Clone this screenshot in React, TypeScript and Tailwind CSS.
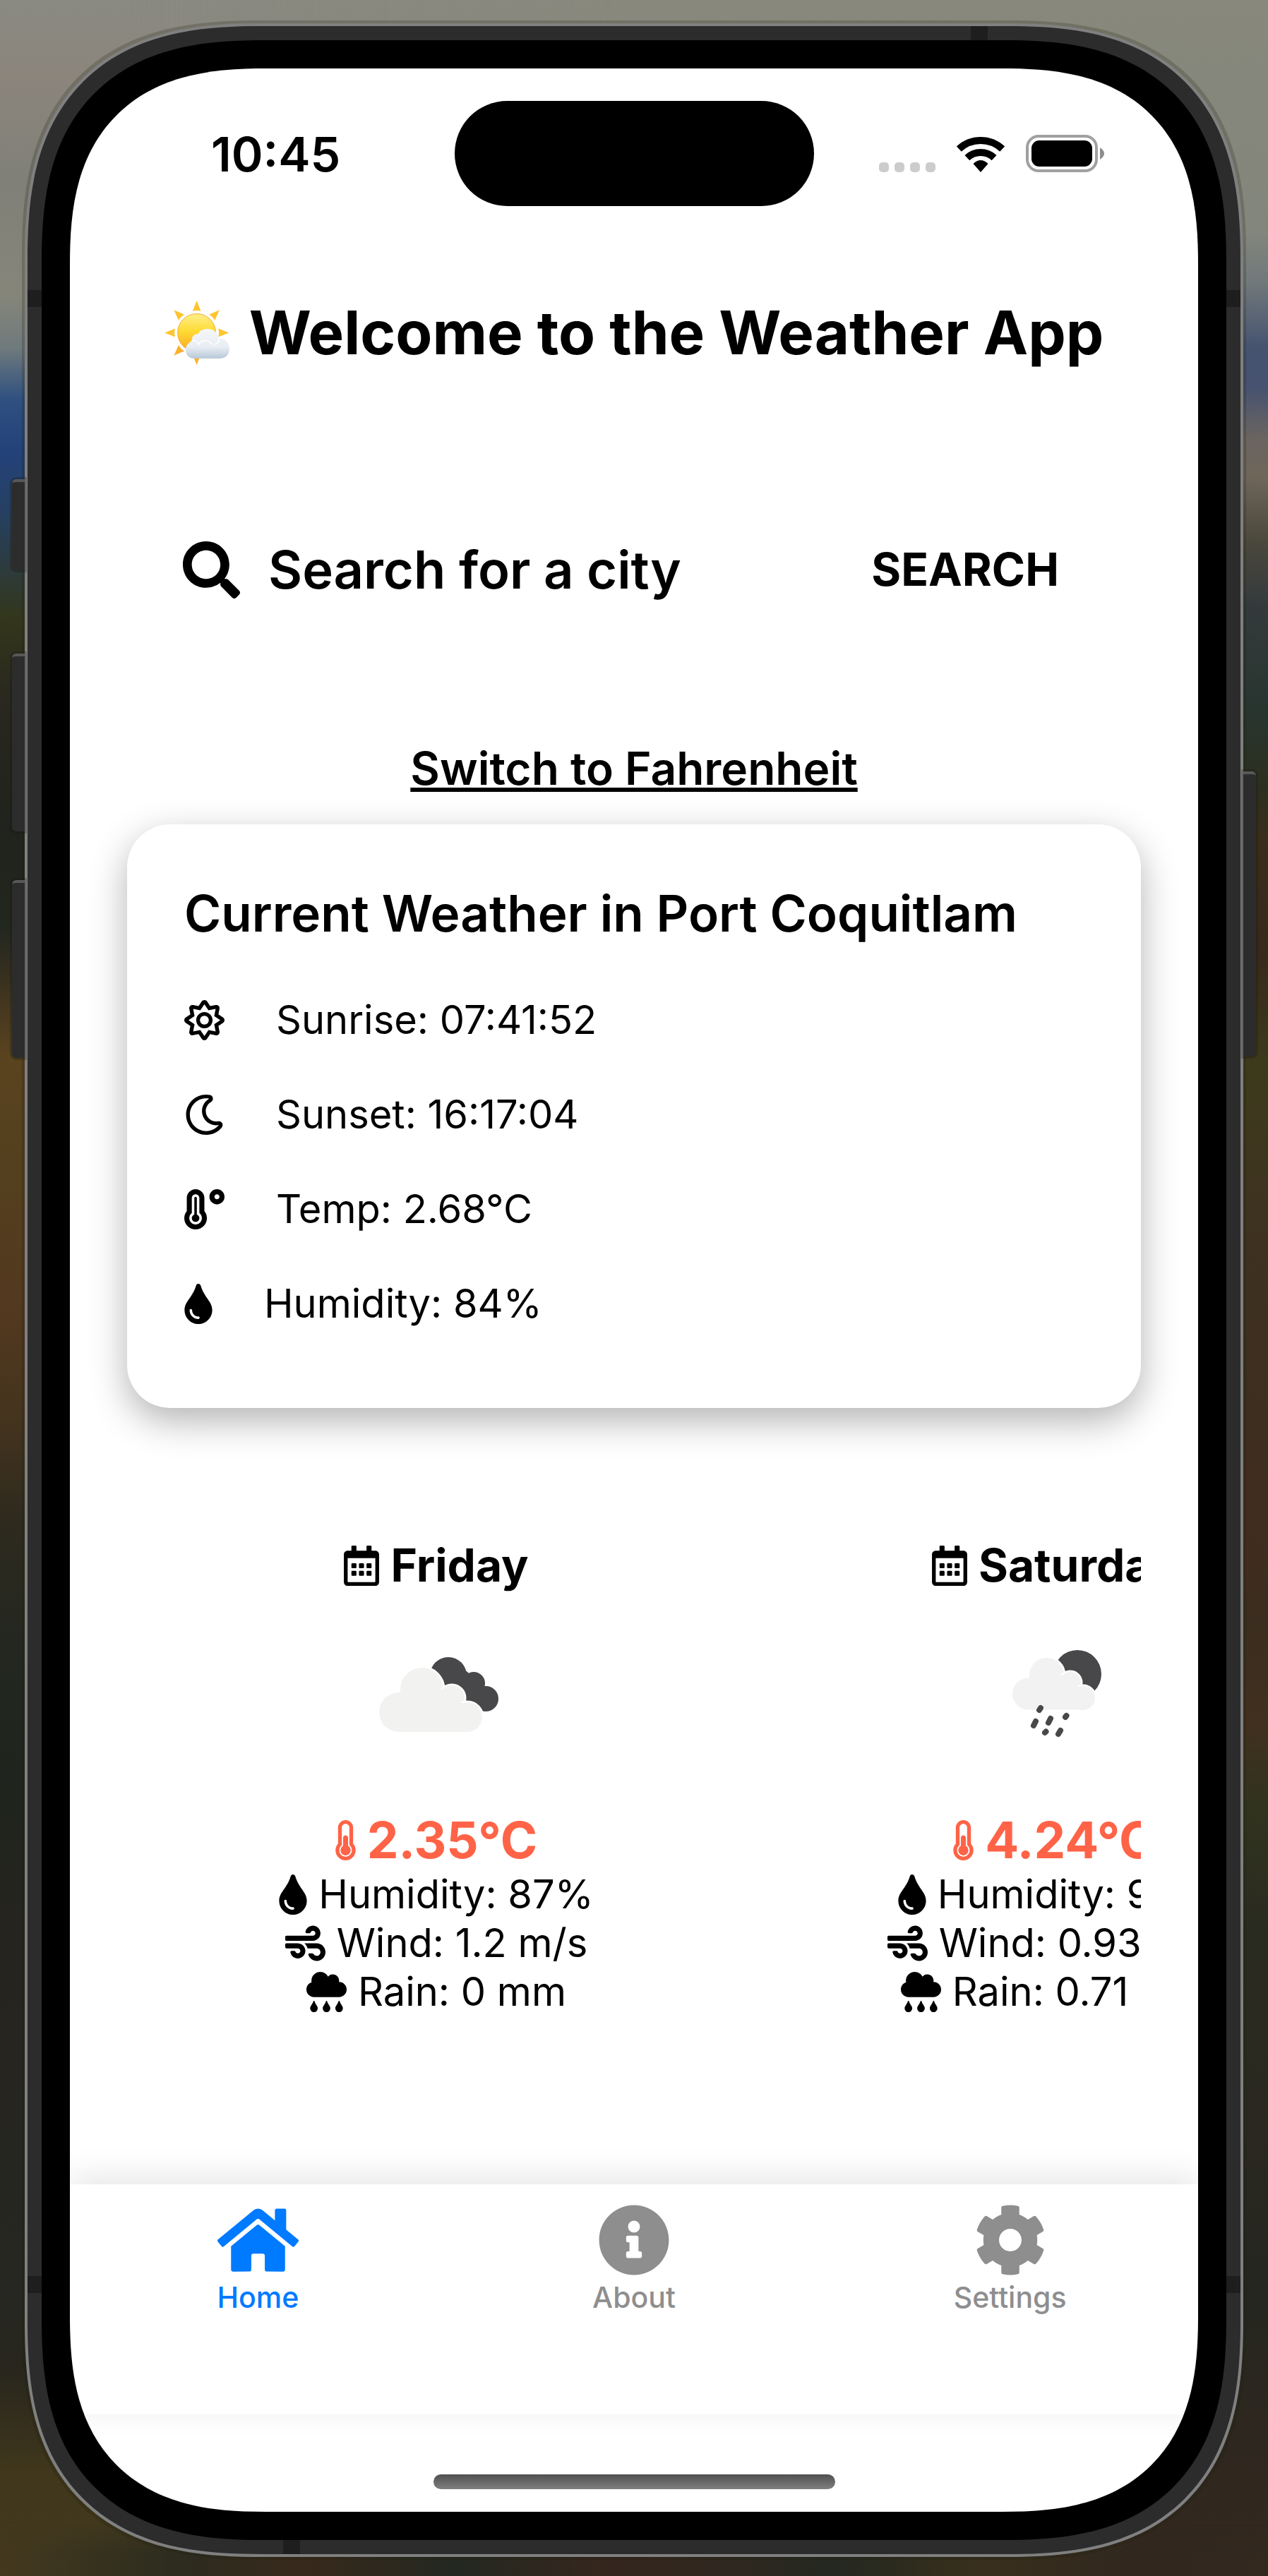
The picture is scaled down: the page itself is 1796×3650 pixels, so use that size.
import type { IconType } from "react-icons";
import {
  FaCloudRain,
  FaCog,
  FaHome,
  FaInfoCircle,
  FaRegCalendarAlt,
  FaRegMoon,
  FaRegSun,
  FaSearch,
  FaTemperatureHigh,
  FaThermometerHalf,
  FaTint,
  FaWind,
} from "react-icons/fa";

function SunBehindCloud() {
  const rays = [0, 45, 90, 135, 180, 225, 270, 315];
  return (
    <svg className="h-[92px] w-[92px] shrink-0" viewBox="0 0 92 92" aria-hidden="true">
      <defs>
        <linearGradient id="sunFill" x1="0" y1="0" x2="0" y2="1">
          <stop offset="0" stopColor="#fdf08a" />
          <stop offset="0.45" stopColor="#ffdb36" />
          <stop offset="1" stopColor="#f9a61c" />
        </linearGradient>
        <linearGradient id="cloudFill" x1="0" y1="0" x2="0" y2="1">
          <stop offset="0" stopColor="#f4f6fa" />
          <stop offset="0.6" stopColor="#e9eef4" />
          <stop offset="1" stopColor="#b9c8d8" />
        </linearGradient>
      </defs>
      {rays.map((angle) => (
        <path
          key={angle}
          d="M45.6 0 L51.5 15 Q45.6 13 39.7 15 Z"
          fill={angle > 90 && angle < 270 ? "#fbb02c" : "#fdc52f"}
          transform={`rotate(${angle} 45.6 45.5)`}
        />
      ))}
      <circle cx="45.6" cy="45.5" r="27" fill="url(#sunFill)" stroke="#f6a93a" strokeWidth="1" />
      <path
        d="M42 82 C34 82 30 76 30 70 C30 64 34 59 39 57 C38 50 43 47 48 47 C50 42 55 40 61 40 C69 40 76 45 77 53 C86 54 92 60 92 68 C92 77 86 82 78 82 Z"
        fill="url(#cloudFill)"
      />
      <path
        d="M39 57 C43 56 47 58 49 62 M50 60 C53 56 63 55 67 62 M77 53 C78 57 76 60 72 62"
        fill="none"
        stroke="#fbfcfe"
        strokeWidth="2"
        strokeLinecap="round"
      />
    </svg>
  );
}

function WifiIcon() {
  return (
    <svg className="h-[51px] w-[68px]" viewBox="0 0 68 51" aria-hidden="true">
      <g fill="none" stroke="#000">
        <path d="M3.3 18 A45 45 0 0 1 64.7 18" strokeWidth="10" />
        <path d="M14.9 30.6 A28 28 0 0 1 53.1 30.6" strokeWidth="10" />
      </g>
      <path d="M34 51 L23.5 39 Q34 29 44.5 39 Z" />
    </svg>
  );
}

function BatteryIcon() {
  return (
    <svg className="h-[53px] w-[112px]" viewBox="0 0 112 53" aria-hidden="true">
      <rect x="2" y="2" width="98" height="49" rx="16" fill="none" stroke="#a0a0a0" strokeWidth="4" />
      <rect x="8" y="8" width="86" height="37" rx="11" fill="#000" />
      <path d="M105 18 Q111 22 111 26.5 Q111 31 105 35 Z" fill="#8e8e8e" />
    </svg>
  );
}

function BrokenClouds() {
  return (
    <svg className="h-[204px] w-[204px]" viewBox="0 0 204 204" role="img" aria-label="Broken clouds">
      <g fill="#48484a">
        <circle cx="119" cy="76" r="26" />
        <circle cx="155" cy="87" r="16" />
        <circle cx="172" cy="109" r="18" />
        <path d="M110 80 L145 70 L168 92 L168 127 L130 120 Z" />
      </g>
      <g fill="#f2f2f1" stroke="#fff" strokeWidth="5" paintOrder="stroke">
        <circle cx="49" cy="128" r="28" />
        <circle cx="81.5" cy="95.5" r="30.5" />
        <circle cx="124" cy="108" r="18" />
        <circle cx="146" cy="135" r="21" />
      </g>
      <path
        fill="#f2f2f1"
        d="M49 100 L60 95 L110 95 L124 100 L138 115 L146 116 V156 H49 Z"
      />
    </svg>
  );
}

function NightRain() {
  return (
    <svg className="h-[204px] w-[204px]" viewBox="0 0 204 204" role="img" aria-label="Rain">
      <circle cx="134" cy="74" r="34" fill="#48484a" />
      <g fill="#f2f2f2" stroke="#fff" strokeWidth="5" paintOrder="stroke">
        <circle cx="64.5" cy="102" r="22.5" />
        <circle cx="90.5" cy="75.5" r="24.5" />
        <circle cx="124" cy="86" r="15" />
        <circle cx="142" cy="108" r="17" />
      </g>
      <path fill="#f2f2f2" d="M64 80 L75 76 L114 76 L124 80 L136 92 L142 92 V124.500 H64.500 Z" />
      <path d="M80 125 L82 122" stroke="#fff" strokeWidth="10" strokeLinecap="round" />
      <g stroke="#48484a" strokeWidth="8" strokeLinecap="round">
        <path d="M80 125 L82 122" />
        <path d="M72 147 L75 141" />
        <path d="M93 143 L96 137" />
        <path d="M88 157 L89.500 155.500" />
        <path d="M117 135 L118.500 133" />
        <path d="M107 159 L110 154" />
      </g>
    </svg>
  );
}

const conditions: { icon: IconType; text: string; iconClass: string }[] = [
  { icon: FaRegSun, text: "Sunrise: 07:41:52", iconClass: "h-[57px] w-[57px]" },
  { icon: FaRegMoon, text: "Sunset: 16:17:04", iconClass: "h-[57px] w-[57px]" },
  { icon: FaTemperatureHigh, text: "Temp: 2.68°C", iconClass: "h-[57px] w-[57px]" },
  { icon: FaTint, text: "Humidity: 84%", iconClass: "h-[57px] w-[40px]" },
];

const forecast = [
  { day: "Friday", Picture: BrokenClouds, temp: "2.35°C", humidity: "87%", wind: "1.2 m/s", rain: "0 mm" },
  { day: "Saturday", Picture: NightRain, temp: "4.24°C", humidity: "97%", wind: "0.93 m/s", rain: "0.71 mm" },
];

const tabs: { icon: IconType; label: string; iconClass: string; active?: boolean }[] = [
  { icon: FaHome, label: "Home", iconClass: "h-[102px] w-[115px]", active: true },
  { icon: FaInfoCircle, label: "About", iconClass: "h-[102px] w-[102px]" },
  { icon: FaCog, label: "Settings", iconClass: "h-[102px] w-[102px]" },
];

function StatusBar() {
  return (
    <div className="grid grid-cols-[1fr_auto_1fr] items-center pt-[46px]">
      <div className="pl-[200px] text-[68px] leading-[80px] font-semibold">10:45</div>
      <div className="h-[149px] w-[509px] rounded-full bg-black" />
      <div className="flex items-end justify-end gap-[30px] pr-[132px]">
        <div className="flex gap-2">
          {[0, 1, 2, 3].map((dot) => (
            <span key={dot} className="size-[14px] rounded-[5px] bg-[#cccccc]" />
          ))}
        </div>
        <WifiIcon />
        <BatteryIcon />
      </div>
    </div>
  );
}

function SideButton({ className }: { className: string }) {
  return (
    <span
      className={`absolute w-[18px] border-t-4 border-[#585858] bg-[#2c2c2c] shadow-[0_0_0_3px_rgba(20,20,10,0.25)] ${className}`}
    />
  );
}

export default function App() {
  return (
    <div className="relative isolate min-h-screen bg-[linear-gradient(180deg,#8a8a82_0%,#8b857c_3%,#808078_7%,#85857a_11.500%,#6f7a7c_13.500%,#2f5080_15.500%,#23427a_17.500%,#264060_20%,#33361b_24%,#2a281f_27%,#20231d_32%,#22271f_36%,#38301f_38%,#5a431f_41%,#54401e_45%,#52381f_51%,#45341e_55%,#2e2a1e_59%,#232720_64%,#1f251e_69%,#26241f_75%,#262722_89%,#28261d_92%,#40371c_96%,#44391e_100%)] pt-[33px] pb-[27px] font-['Inter','Liberation_Sans',sans-serif] text-black">
      <div className="absolute inset-y-0 right-0 -z-10 w-full bg-[linear-gradient(180deg,#88887c_0%,#83867c_9%,#70787a_11%,#46536f_13.500%,#465270_15%,#6a6460_17%,#6f665a_18.500%,#4b483c_21%,#343a3c_23.500%,#28352f_27.500%,#2b2f1f_30.500%,#3a2d1c_32.500%,#38291b_37%,#3d3a1c_41.500%,#3e3120_48%,#3e2e20_56%,#422c20_59%,#3b2d1f_63%,#41301f_67%,#31331e_70%,#2a2b20_75%,#2a2820_83%,#24261f_89%,#30271f_96%,#33291f_100%)] mask-[linear-gradient(90deg,transparent_10%,black_60%)]" />
      <div className="absolute inset-x-0 bottom-0 -z-10 h-20 bg-[linear-gradient(90deg,#44391e_0%,#2c2c1f_14%,#38291c_24%,#232820_36%,#35261e_47%,#31271f_55%,#242820_66%,#382f1d_77%,#31271f_90%,#33291f_100%)] mask-[linear-gradient(180deg,transparent_0%,black_60%)]" />

      <div className="relative mx-[35px] rounded-[287px] bg-[#808080] p-1 shadow-[0_0_0_4px_rgba(30,30,15,0.22)] supports-[corner-shape:squircle]:rounded-[335px] supports-[corner-shape:squircle]:[corner-shape:superellipse(1.35)]">
        <SideButton className="top-[646px] -left-[18px] h-[129px] rounded-l-md" />
        <SideButton className="top-[893px] -left-[18px] h-[252px] rounded-l-md" />
        <SideButton className="top-[1214px] -left-[18px] h-[252px] rounded-l-md" />
        <SideButton className="top-[1060px] -right-[18px] h-[404px] rounded-r-md" />

        <div className="relative overflow-hidden rounded-[283px] bg-[#2c2c2c] p-5 supports-[corner-shape:squircle]:rounded-[331px] supports-[corner-shape:squircle]:[corner-shape:superellipse(1.35)]">
          <span className="absolute top-[374px] left-0 h-6 w-full bg-[#1e1e1e]" />
          <span className="absolute bottom-[370px] left-0 h-6 w-full bg-[#1e1e1e]" />
          <span className="absolute top-0 right-[358px] h-10 w-6 bg-[#1e1e1e]" />
          <span className="absolute bottom-0 left-[362px] h-10 w-6 bg-[#1e1e1e]" />

          <div className="relative rounded-[263px] bg-black p-10 supports-[corner-shape:squircle]:rounded-[315px] supports-[corner-shape:squircle]:[corner-shape:superellipse(1.35)]">
            <div className="overflow-hidden rounded-[223px] bg-white supports-[corner-shape:squircle]:rounded-[278px] supports-[corner-shape:squircle]:[corner-shape:superellipse(1.35)]">
              <StatusBar />

              <main className="px-[81px]">
                <h1 className="mt-[126px] flex items-center justify-center gap-7 text-[85px] leading-[108px] font-bold whitespace-nowrap">
                  <SunBehindCloud />
                  Welcome to the Weather App
                </h1>

                <form
                  className="mt-[237px] flex items-center pr-[116px] pl-[79px]"
                  onSubmit={(event) => event.preventDefault()}
                >
                  <label htmlFor="city" className="shrink-0">
                    <FaSearch className="size-[81px]" aria-label="City" />
                  </label>
                  <input
                    id="city"
                    type="text"
                    placeholder="Search for a city"
                    className="ml-10 h-[88px] min-w-0 flex-1 text-[74px] leading-[88px] font-semibold outline-none placeholder:text-black"
                  />
                  <button type="submit" className="text-[64px] leading-[80px] font-bold">
                    SEARCH
                  </button>
                </form>

                <div className="mt-[198px] flex justify-center">
                  <button
                    type="button"
                    className="text-[64px] leading-[80px] font-semibold underline decoration-[6px] underline-offset-[4px] [text-decoration-skip-ink:none]"
                  >
                    Switch to Fahrenheit
                  </button>
                </div>

                <section className="mt-[39px] rounded-[61px] bg-white px-[81px] pt-[82px] pb-[113px] shadow-[0_18px_52px_rgba(0,0,0,0.3)]">
                  <h2 className="text-[71px] leading-[88px] font-semibold whitespace-nowrap">
                    Current Weather in Port Coquitlam
                  </h2>
                  <ul className="mt-[73px] flex flex-col gap-[65px]">
                    {conditions.map(({ icon: Icon, text, iconClass }) => (
                      <li key={text} className="flex items-center gap-[73px] text-[56px] leading-[69px]">
                        <Icon className={iconClass} />
                        {text}
                      </li>
                    ))}
                  </ul>
                </section>

                <section className="mt-[183px] flex overflow-hidden" aria-label="Forecast">
                  {forecast.map(({ day, Picture, temp, humidity, wind, rain }) => (
                    <article
                      key={day}
                      className="flex shrink-0 basis-[61%] flex-col items-center text-[56px] leading-[69px] whitespace-nowrap"
                    >
                      <h3 className="flex items-center gap-4 text-[64px] leading-[80px] font-bold">
                        <FaRegCalendarAlt className="h-[57px] w-[50px]" />
                        {day}
                      </h3>
                      <div className="mt-10">
                        <Picture />
                      </div>
                      <p className="mt-[62px] flex items-center gap-4 text-[71px] leading-[86px] font-bold text-[#ff6347]">
                        <FaThermometerHalf className="h-[57px] w-[29px]" />
                        {temp}
                      </p>
                      <p className="flex items-center gap-4">
                        <FaTint className="h-[57px] w-[40px]" />
                        Humidity: {humidity}
                      </p>
                      <p className="flex items-center gap-4">
                        <FaWind className="size-[57px]" />
                        Wind: {wind}
                      </p>
                      <p className="flex items-center gap-4">
                        <FaCloudRain className="size-[57px]" />
                        Rain: {rain}
                      </p>
                    </article>
                  ))}
                </section>
              </main>

              <nav className="mt-[238px] grid grid-cols-3 pt-7 pb-[142px] shadow-[0_-10px_44px_rgba(0,0,0,0.1)]">
                {tabs.map(({ icon: Icon, label, iconClass, active }) => (
                  <a
                    key={label}
                    href={`#${label.toLowerCase()}`}
                    aria-current={active ? "page" : undefined}
                    className={`flex flex-col items-center gap-1.5 text-[41px] leading-[48px] font-medium ${active ? "text-[#007aff]" : "text-[#8e8e8f]"}`}
                  >
                    <Icon className={iconClass} />
                    {label}
                  </a>
                ))}
              </nav>

              <div className="flex justify-center pt-[85px] pb-8">
                <div className="h-[21px] w-[569px] rounded-full bg-linear-to-b from-[#505050] to-[#808080]" />
              </div>
            </div>
          </div>
        </div>
      </div>
    </div>
  );
}
